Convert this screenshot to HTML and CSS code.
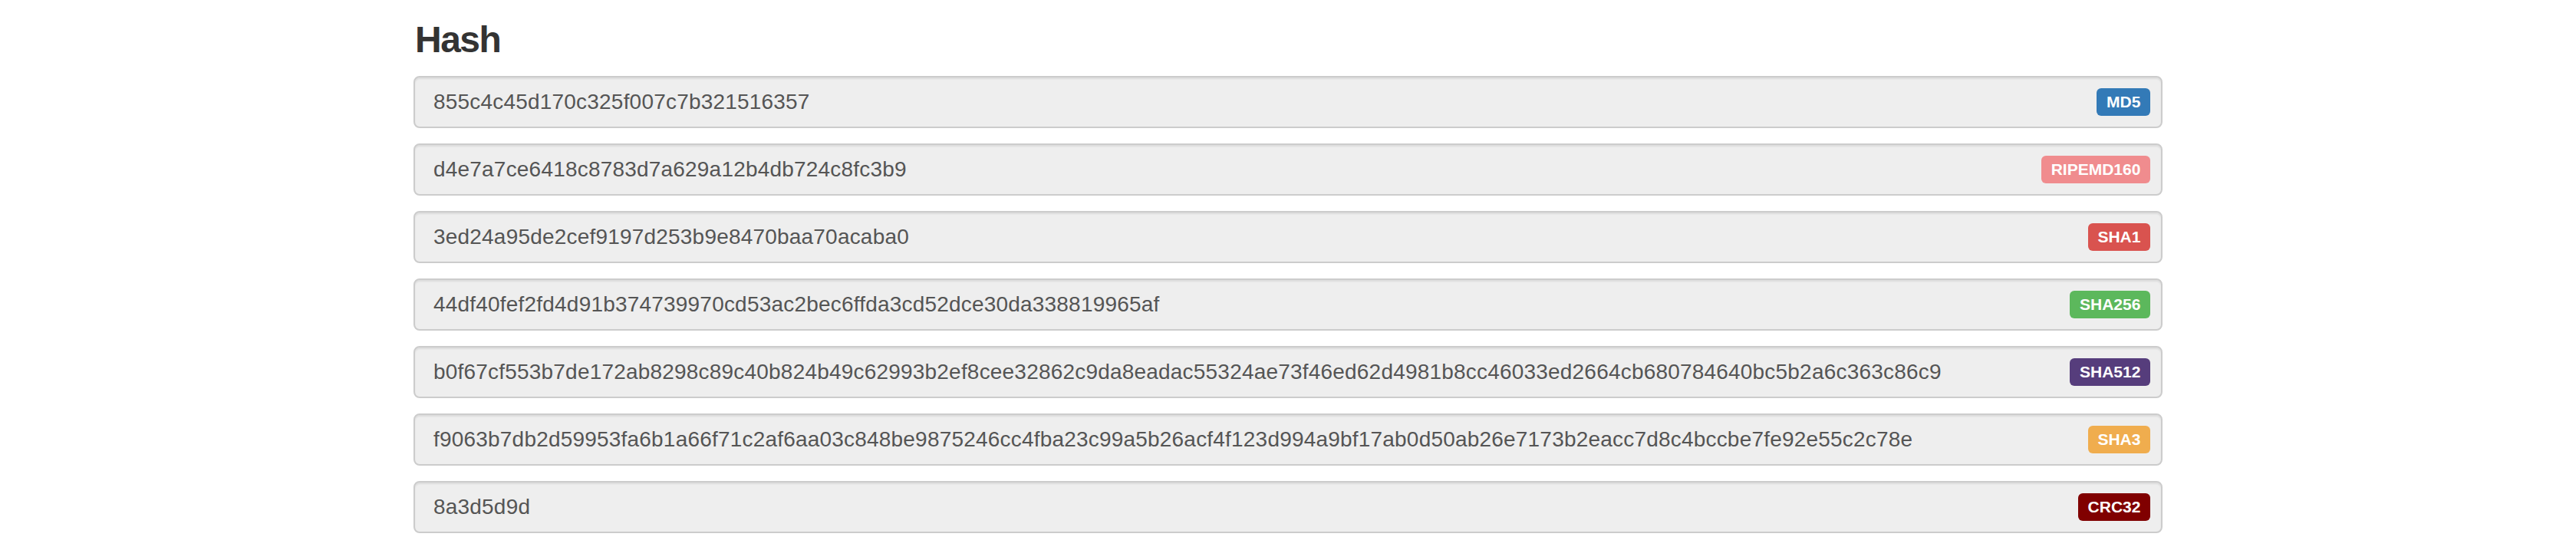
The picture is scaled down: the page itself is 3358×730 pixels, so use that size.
FILE: index.html
```html
<!DOCTYPE html>
<html>
<head>
<meta charset="utf-8">
<title>Hash</title>
<link rel="stylesheet" href="styles.css">
</head>
<body>
<div class="container">
  <h3 class="title">Hash</h3>
  <div class="hash-row"><span class="hash-value">855c4c45d170c325f007c7b321516357</span><span class="tag tag-md5">MD5</span></div>
  <div class="hash-row"><span class="hash-value">d4e7a7ce6418c8783d7a629a12b4db724c8fc3b9</span><span class="tag tag-ripemd">RIPEMD160</span></div>
  <div class="hash-row"><span class="hash-value">3ed24a95de2cef9197d253b9e8470baa70acaba0</span><span class="tag tag-sha1">SHA1</span></div>
  <div class="hash-row"><span class="hash-value">44df40fef2fd4d91b374739970cd53ac2bec6ffda3cd52dce30da338819965af</span><span class="tag tag-sha256">SHA256</span></div>
  <div class="hash-row"><span class="hash-value">b0f67cf553b7de172ab8298c89c40b824b49c62993b2ef8cee32862c9da8eadac55324ae73f46ed62d4981b8cc46033ed2664cb680784640bc5b2a6c363c86c9</span><span class="tag tag-sha512">SHA512</span></div>
  <div class="hash-row"><span class="hash-value">f9063b7db2d59953fa6b1a66f71c2af6aa03c848be9875246cc4fba23c99a5b26acf4f123d994a9bf17ab0d50ab26e7173b2eacc7d8c4bccbe7fe92e55c2c78e</span><span class="tag tag-sha3">SHA3</span></div>
  <div class="hash-row"><span class="hash-value">8a3d5d9d</span><span class="tag tag-crc32">CRC32</span></div>
</div>
</body>
</html>
```

FILE: styles.css
```css
html, body {
  margin: 0;
  padding: 0;
  background: #fff;
}

body {
  font-family: "Liberation Sans", Arial, Helvetica, sans-serif;
  color: #333;
}

.container {
  width: 2280px;
  margin: 0 auto;
  padding-top: 26px;
  display: flex;
  flex-direction: column;
  gap: 20px;
}

.title {
  margin: 0;
  padding-left: 2px;
  font-size: 48px;
  line-height: 52.8px;
  font-weight: 700;
  letter-spacing: -1.5px;
  color: #333;
}

.hash-row {
  box-sizing: border-box;
  height: 68px;
  display: flex;
  align-items: center;
  justify-content: space-between;
  padding: 0 14px 0 24px;
  background: #eeeeee;
  border: 2px solid #cccccc;
  border-radius: 8px;
  box-shadow: inset 0 2px 2px rgba(0, 0, 0, 0.075);
}

.hash-value {
  font-size: 28px;
  line-height: 40px;
  letter-spacing: 0.2px;
  color: #555;
  white-space: nowrap;
}

.tag {
  display: inline-block;
  font-size: 21px;
  font-weight: 700;
  line-height: 21px;
  padding: 7.5px 12.6px 7.5px;
  border-radius: 6px;
  color: #fff;
  white-space: nowrap;
}

.tag-md5 { background: #337ab7; }
.tag-ripemd { background: #f08c8e; }
.tag-sha1 { background: #d9534f; }
.tag-sha256 { background: #5cb85c; }
.tag-sha512 { background: #563d7c; }
.tag-sha3 { background: #f0ad4e; }
.tag-crc32 { background: #800000; }
```
